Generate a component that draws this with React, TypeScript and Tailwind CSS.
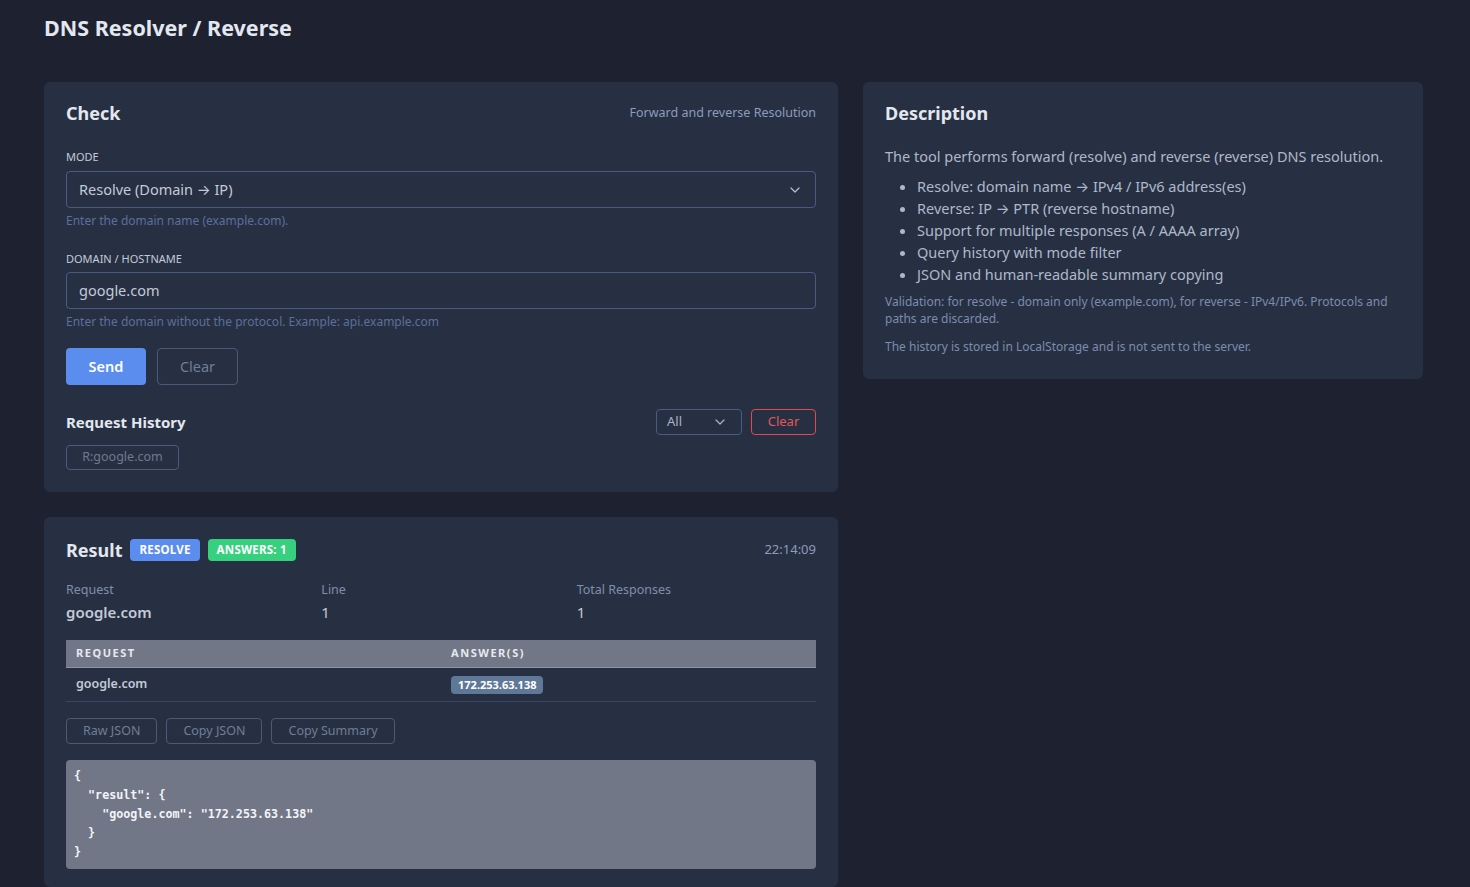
import { ChevronDown } from 'lucide-react'

const DESCRIPTION_ITEMS = [
  ['Resolve: domain name ', ' IPv4 / IPv6 address(es)'],
  ['Reverse: IP ', ' PTR (reverse hostname)'],
  ['Support for multiple responses (A / AAAA array)'],
  ['Query history with mode filter'],
  ['JSON and human-readable summary copying'],
]

const STATS = [
  { label: 'Request', value: 'google.com', bold: true },
  { label: 'Line', value: '1' },
  { label: 'Total Responses', value: '1' },
]

const JSON_TEXT = `{
  "result": {
    "google.com": "172.253.63.138"
  }
}`

function Card({ children, className = '' }: { children: React.ReactNode; className?: string }) {
  return <div className={`rounded-md bg-[#273042] px-[22px] ${className}`}>{children}</div>
}

// Noto Sans draws a tiny arrow, so take it from Inter
function Arrow() {
  return (
    <span className="leading-none" style={{ fontFamily: 'Inter, "DejaVu Sans", sans-serif' }}>
      →
    </span>
  )
}

export default function App() {
  return (
    <div
      className="min-h-screen bg-[#1d2130] px-[44px] pt-[14px] text-[#c3cad8]"
      style={{ fontFamily: '"Noto Sans", "Open Sans", sans-serif' }}
    >
      {/* ---------- Title ---------- */}
      <h1 className="text-[21.5px] font-bold leading-[28px] text-[#e3e7ef]">DNS Resolver / Reverse</h1>

      <div className="mt-[40px] flex items-start gap-[25px]">
        {/* ---------- Left ---------- */}
        <div className="flex w-[794px] flex-col gap-[25px]">
          <Card className="pb-[22px] pt-[19px]">
            <div className="flex items-center justify-between">
              <h2 className="text-[18px] font-bold leading-[24px] text-[#e3e7ef]">Check</h2>
              <span className="text-[12.5px] text-[#8a9cbf]">Forward and reverse Resolution</span>
            </div>

            <div className="mt-[25px] text-[11px] uppercase leading-[14px] text-[#c3cad8]">Mode</div>
            <div className="mt-[7px] flex h-[37px] items-center justify-between rounded border border-[#4a5b82] px-3">
              <span className="text-[14.5px] text-[#c3cad8]">
                Resolve (Domain <Arrow /> IP)
              </span>
              <ChevronDown className="h-4 w-4 text-[#b5bfd2]" strokeWidth={1.8} />
            </div>
            <div className="mt-[5px] text-[12px] leading-[16px] text-[#5b6f9b]">Enter the domain name (example.com).</div>

            <div className="mt-[23px] text-[11px] uppercase leading-[14px] text-[#c3cad8]">Domain / Hostname</div>
            <div className="mt-[6px] flex h-[37px] items-center rounded border border-[#4a5b82] px-3">
              <span className="text-[14.5px] text-[#c3cad8]">google.com</span>
            </div>
            <div className="mt-[5px] text-[12px] leading-[16px] text-[#5b6f9b]">
              Enter the domain without the protocol. Example: api.example.com
            </div>

            <div className="mt-[18px] flex gap-[11px]">
              <button type="button" className="h-[37px] w-[80px] rounded bg-[#5b8def] text-[14.5px] font-semibold text-white">
                Send
              </button>
              <button
                type="button"
                className="h-[37px] w-[81px] rounded border border-[#4a5a75] text-[14.5px] text-[#6e7e96]"
              >
                Clear
              </button>
            </div>

            <div className="mt-[24px] flex items-center justify-between">
              <h3 className="text-[15px] font-bold text-[#e3e7ef]">Request History</h3>
              <div className="flex gap-[9px]">
                <div className="flex h-[26px] w-[86px] items-center justify-between rounded border border-[#4a5b82] pl-[10px] pr-[13px]">
                  <span className="text-[13px] text-[#a9b3c6]">All</span>
                  <ChevronDown className="h-4 w-4 text-[#a9b3c6]" strokeWidth={1.8} />
                </div>
                <button
                  type="button"
                  className="h-[26px] w-[65px] rounded border border-[#e04a4f] text-[13px] text-[#e0585c]"
                >
                  Clear
                </button>
              </div>
            </div>
            <div className="mt-[10px] flex">
              <span className="flex h-[25px] w-[113px] items-center justify-center rounded-sm border border-[#4a5a7a] text-[12.5px] text-[#6b7a93]">
                R:google.com
              </span>
            </div>
          </Card>

          <Card className="pb-[18px] pt-[22px]">
            <div className="flex items-center justify-between">
              <div className="flex items-center gap-2">
                <h2 className="text-[18px] font-bold leading-[22px] text-[#e3e7ef]">Result</h2>
                <span className="rounded-sm bg-[#5b8def] px-[9px] py-[4px] text-[11.5px] font-bold leading-[14px] tracking-[0.02em] text-white">
                  RESOLVE
                </span>
                <span className="rounded-sm bg-[#36d07f] px-[9px] py-[4px] text-[11.5px] font-bold leading-[14px] tracking-[0.02em] text-white">
                  ANSWERS: 1
                </span>
              </div>
              <span className="text-[13px] text-[#8c9bba]">22:14:09</span>
            </div>

            <div className="mt-[20px] grid grid-cols-3 gap-4">
              {STATS.map((s) => (
                <div key={s.label}>
                  <div className="text-[12.5px] leading-[18px] text-[#7f8eab]">{s.label}</div>
                  <div className={`mt-[2px] text-[15px] leading-[22px] text-[#c3cad8] ${s.bold ? 'font-semibold' : ''}`}>
                    {s.value}
                  </div>
                </div>
              ))}
            </div>

            <div className="mt-[17px]">
              <div className="grid h-[28px] grid-cols-2 items-center border-b border-[#8d94a3] bg-[#717786] text-[11px] font-bold tracking-[0.14em] text-[#e6e9ef]">
                <span className="px-[10px]">REQUEST</span>
                <span className="px-[10px]">ANSWER(S)</span>
              </div>
              <div className="grid h-[34px] grid-cols-2 items-center border-b border-[#3a4560]">
                <span className="px-[10px] text-[12.5px] font-semibold text-[#c3cad8]">google.com</span>
                <div className="flex px-[10px]">
                  <span className="rounded-sm bg-[#5f7898] px-[7px] text-[11px] font-bold leading-[18px] text-white">
                    172.253.63.138
                  </span>
                </div>
              </div>
            </div>

            <div className="mt-[16px] flex gap-[9px]">
              {['Raw JSON', 'Copy JSON', 'Copy Summary'].map((t) => (
                <button
                  key={t}
                  type="button"
                  className="h-[26px] rounded-sm border border-[#4a5a78] px-4 text-[12.5px] text-[#6e7e96]"
                >
                  {t}
                </button>
              ))}
            </div>

            <pre
              className="mt-[16px] rounded bg-[#717786] px-[8px] py-[7px] text-[11.7px] font-bold leading-[19px] text-[#f2f4f8]"
              style={{ fontFamily: '"DejaVu Sans Mono", "Liberation Mono", monospace' }}
            >
              {JSON_TEXT}
            </pre>
          </Card>
        </div>

        {/* ---------- Right ---------- */}
        <Card className="w-[560px] pb-[24px] pt-[19px]">
          <h2 className="text-[18px] font-bold leading-[24px] text-[#e3e7ef]">Description</h2>
          <p className="mt-[21px] text-[14.5px] leading-[20px] text-[#aeb8ca]">
            The tool performs forward (resolve) and reverse (reverse) DNS resolution.
          </p>
          <ul className="mt-[9px] list-disc pl-[32px] text-[14.5px] leading-[22px] text-[#aeb8ca] marker:text-[#aeb8ca]">
            {DESCRIPTION_ITEMS.map(([a, b]) => (
              <li key={a} className="h-[22px]">
                {a}
                {b !== undefined && (
                  <>
                    <Arrow />
                    {b}
                  </>
                )}
              </li>
            ))}
          </ul>
          <p className="mt-[8px] text-[12px] leading-[17px] text-[#7b8cae]">
            Validation: for resolve - domain only (example.com), for reverse - IPv4/IPv6. Protocols and paths are discarded.
          </p>
          <p className="mt-[11px] text-[12px] leading-[17px] text-[#7b8cae]">
            The history is stored in LocalStorage and is not sent to the server.
          </p>
        </Card>
      </div>
    </div>
  )
}
